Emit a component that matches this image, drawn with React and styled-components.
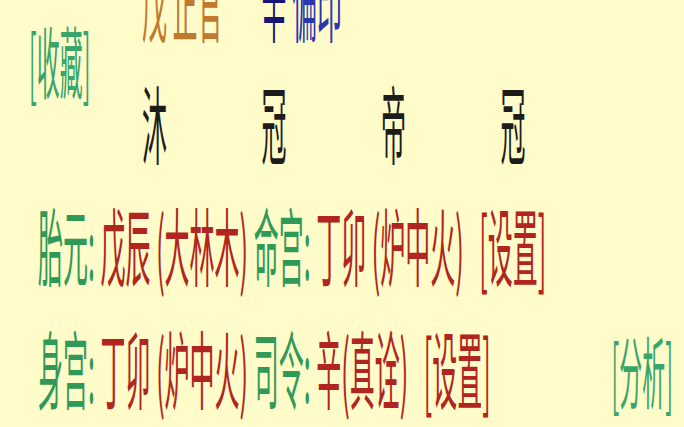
import React from "react";
import styled, { createGlobalStyle } from "styled-components";

const GlobalStyle = createGlobalStyle`
	html, body {
		margin: 0;
		padding: 0;
		background: #fffcc9;
	}
`;

const Page = styled.div`
	width: 684px;
	height: 427px;
	overflow: hidden;
	background: #fffcc9;
`;

const Stretch = styled.div`
	transform: translateY(-63px) scaleY(3.4);
	transform-origin: 0 0;
	font-family: "Noto Sans CJK SC", "Noto Sans", sans-serif;
	font-size: 25px;
	line-height: 36px;
	white-space: pre;
`;

const PillarGrid = styled.div`
	display: grid;
	grid-template-columns: 142px repeat(4, 119.5px);
	grid-template-rows: 36px 36px;
`;

const SideLink = styled.div`
	grid-row: span 2;
	align-self: center;
	padding-left: 29px;
	font-size: 23px;
	color: #3aa56a;
`;

const Cell = styled.div`
	color: ${(p) => p.color || "#1c1c1c"};
`;

const Tone = styled.span`
	color: ${(p) => p.color};
`;

const Line = styled.div`
	display: flex;
	align-items: baseline;
	padding: 0 11px 0 38px;
`;

const Label = styled.span`
	color: #2f9a58;
`;

const Value = styled.span`
	color: #b02520;
`;

const Action = styled.span`
	margin-left: 10px;
	color: #b02520;
`;

const SideAction = styled.span`
	margin-left: auto;
	font-size: 23px;
	color: #3aa56a;
`;

const App = () => {
	return (
		<Page>
			<GlobalStyle />
			<Stretch>
				<PillarGrid>
					<SideLink>[收藏]</SideLink>
					<Cell>
						<Tone color="#c07a30">戊 正官</Tone>
					</Cell>
					<Cell>
						<Tone color="#16167a">辛 </Tone>
						<Tone color="#2a36b0">偏印</Tone>
					</Cell>
					<Cell />
					<Cell />
					<Cell>沐</Cell>
					<Cell>冠</Cell>
					<Cell>帝</Cell>
					<Cell>冠</Cell>
				</PillarGrid>
				<Line>
					<Label>胎元: </Label>
					<Value>戊辰 (大林木) </Value>
					<Label>命宫: </Label>
					<Value>丁卯 (炉中火) </Value>
					<Action>[设置]</Action>
				</Line>
				<Line>
					<Label>身宫: </Label>
					<Value>丁卯 (炉中火) </Value>
					<Label>司令: </Label>
					<Value>辛(真诠) </Value>
					<Action>[设置]</Action>
					<SideAction>[分析]</SideAction>
				</Line>
			</Stretch>
		</Page>
	);
};

export default App;
